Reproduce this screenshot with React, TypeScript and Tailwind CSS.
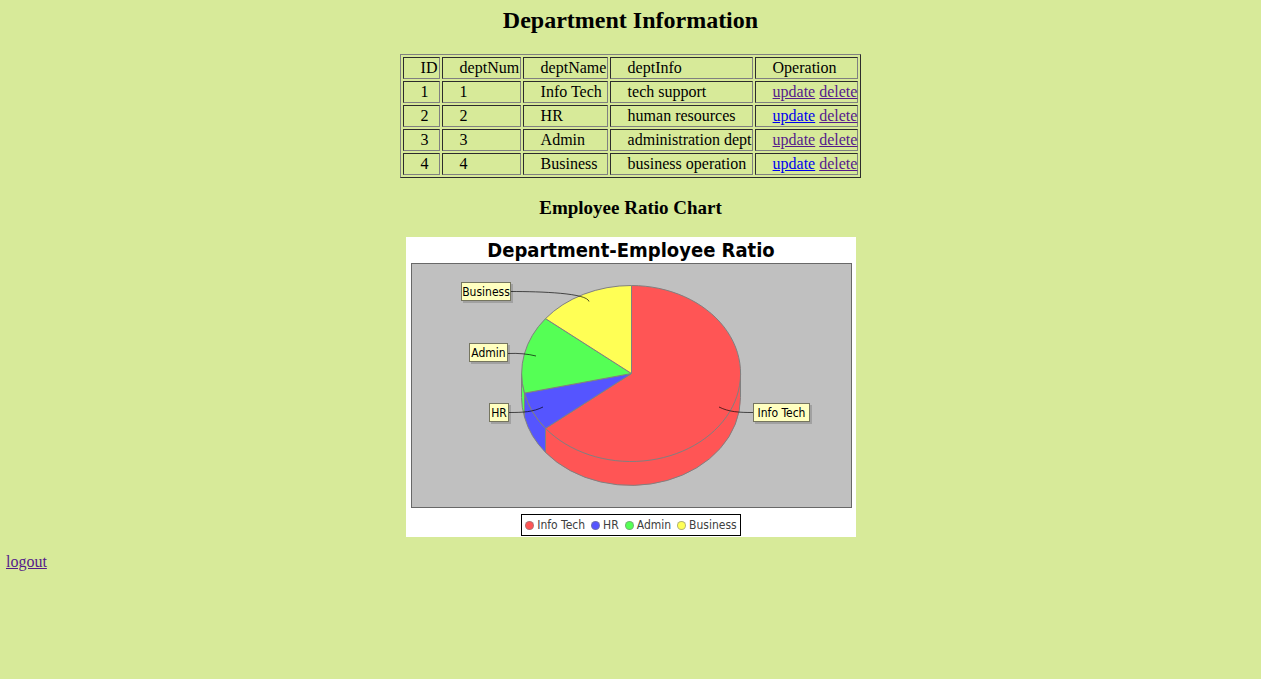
type Department = {
  id: number;
  num: number;
  name: string;
  info: string;
  updateVisited: boolean;
};

const departments: Department[] = [
  { id: 1, num: 1, name: 'Info Tech', info: 'tech support', updateVisited: true },
  { id: 2, num: 2, name: 'HR', info: 'human resources', updateVisited: false },
  { id: 3, num: 3, name: 'Admin', info: 'administration dept', updateVisited: true },
  { id: 4, num: 4, name: 'Business', info: 'business operation', updateVisited: false },
];

const columns = [
  { name: 'ID', width: 'w-[37px]' },
  { name: 'deptNum', width: 'w-[79px]' },
  { name: 'deptName', width: 'w-[85px]' },
  { name: 'deptInfo', width: 'w-[140px]' },
  { name: 'Operation', width: 'w-[103px]' },
];

const legend = [
  { name: 'Info Tech', color: 'bg-[#ff5555]' },
  { name: 'HR', color: 'bg-[#5555ff]' },
  { name: 'Admin', color: 'bg-[#55ff55]' },
  { name: 'Business', color: 'bg-[#ffff55]' },
];

const labels = [
  { name: 'Business', x: 50, y: 19, w: 49, leader: 'M100 28.5 C130 28.5 176 30 178 38.5' },
  { name: 'Admin', x: 58, y: 80, w: 38, leader: 'M97 90.5 C108 90 117 91 125 93' },
  { name: 'HR', x: 78, y: 140, w: 19, leader: 'M98 149.5 C112 149.5 122 149 132 144' },
  { name: 'Info Tech', x: 342, y: 140, w: 56, leader: 'M342 149.5 C328 149.5 318 149 308 144' },
];

const cell =
  'border border-t-[#2c2c2c] border-l-[#2c2c2c] border-r-[#808080] border-b-[#808080] py-px pl-[17px] text-left font-normal whitespace-nowrap';

function DepartmentTable() {
  return (
    <table className="border-separate border-spacing-[2px] border border-t-[#808080] border-l-[#808080] border-r-[#2c2c2c] border-b-[#2c2c2c] text-base leading-[18px]">
      <thead>
        <tr>
          {columns.map((c) => (
            <th key={c.name} scope="col" className={`${cell} ${c.width}`}>
              {c.name}
            </th>
          ))}
        </tr>
      </thead>
      <tbody>
        {departments.map((d) => (
          <tr key={d.id}>
            <td className={cell}>{d.id}</td>
            <td className={cell}>{d.num}</td>
            <td className={cell}>{d.name}</td>
            <td className={cell}>{d.info}</td>
            <td className={cell}>
              <a
                href="#update"
                className={d.updateVisited ? 'text-[#551a8b] underline' : 'text-[#0000ee] underline'}
              >
                update
              </a>{' '}
              <a href="#delete" className="text-[#551a8b] underline">
                delete
              </a>
            </td>
          </tr>
        ))}
      </tbody>
    </table>
  );
}

function PieChart() {
  return (
    <svg viewBox="0 0 441 245" className="block w-full" role="img" aria-label="Department-Employee Ratio">
      <rect x="0.5" y="0.5" width="440" height="244" fill="#c0c0c0" stroke="#686868" />
      <g stroke="#808080" strokeWidth="1" strokeLinejoin="round">
        <path d="M110.5 110.5 V134.5 A110 88 0 0 0 113.5 154.1 V130.1 A110 88 0 0 1 110.5 110.5 Z" fill="#55ff55" />
        <path d="M113.5 130.1 V154.1 A110 88 0 0 0 134.5 189.4 V165.4 A110 88 0 0 1 113.5 130.1 Z" fill="#5555ff" />
        <path d="M134.5 165.4 V189.4 A109.5 88 0 0 0 329.5 134.5 V110.5 Z" fill="#ff5555" />
        <path d="M220.5 110.5 V22.5 A109.5 88 0 1 1 134.5 165.4 Z" fill="#ff5555" />
        <path d="M220.5 110.5 L134.5 165.4 A110 88 0 0 1 113.5 130.1 Z" fill="#5555ff" />
        <path d="M220.5 110.5 L113.5 130.1 A110 88 0 0 1 134.5 55.6 Z" fill="#55ff55" />
        <path d="M220.5 110.5 L134.5 55.6 A110 88 0 0 1 220.5 22.5 Z" fill="#ffff55" />
      </g>
      {labels.map((l) => (
        <g key={l.name}>
          <path d={l.leader} fill="none" stroke="#000" strokeOpacity="0.65" />
          <rect x={l.x + 2} y={l.y + 2} width={l.w + 1} height="19" fill="#000" fillOpacity="0.16" />
          <rect x={l.x + 0.5} y={l.y + 0.5} width={l.w} height="18" fill="#ffffc0" stroke="#75755f" />
          <text x={l.x + l.w / 2 + 0.5} y={l.y + 14} textAnchor="middle" className="text-[12px]" fill="#000">
            {l.name}
          </text>
        </g>
      ))}
    </svg>
  );
}

export default function App() {
  return (
    <div className="min-h-screen bg-[#d7ea99] px-1.5 pt-1.5 font-['Liberation_Serif',serif] text-black">
      <main className="flex flex-col items-center">
        <h1 className="mb-5 text-2xl leading-7 font-bold">Department Information</h1>
        <DepartmentTable />
        <h2 className="mt-[19px] mb-[18px] text-[19px] leading-[22px] font-bold">Employee Ratio Chart</h2>
        <figure className="flex w-full max-w-[450px] flex-col items-center bg-white pr-1 pb-px pl-[5px] font-['DejaVu_Sans_Condensed','Noto_Sans',sans-serif]">
          <figcaption className="pt-0.5 pb-0.5 text-xl leading-[22px] font-bold">Department-Employee Ratio</figcaption>
          <PieChart />
          <ul className="mt-1.5 flex h-[22px] items-center gap-1.5 border border-black px-[3px] text-xs text-[#404040]">
            {legend.map((item) => (
              <li key={item.name} className="flex items-center gap-[3px]">
                <span className={`size-[9px] rounded-full border border-[#808080]/60 ${item.color}`} />
                {item.name}
              </li>
            ))}
          </ul>
        </figure>
      </main>
      <a href="#logout" className="mt-4 inline-block text-base leading-[18px] text-[#551a8b] underline">
        logout
      </a>
    </div>
  );
}
